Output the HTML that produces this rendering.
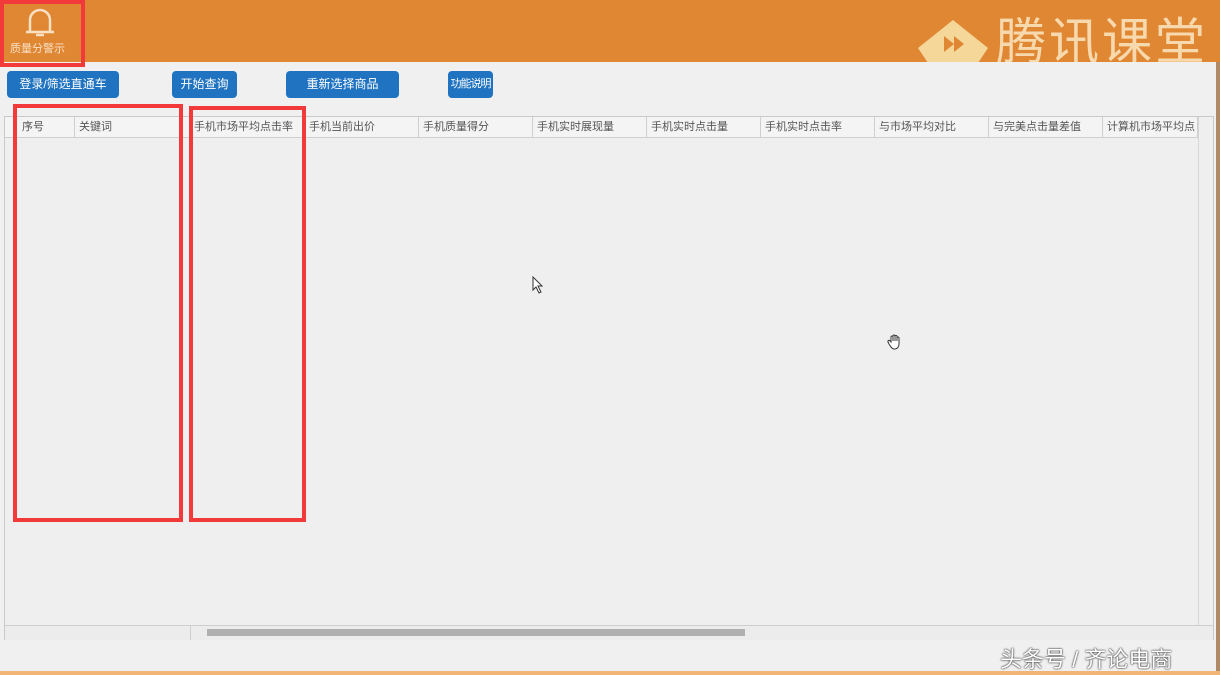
<!DOCTYPE html>
<html><head><meta charset="utf-8"><style>
*{margin:0;padding:0;box-sizing:border-box}
body{width:1220px;height:675px;overflow:hidden;background:#f0f0f0;font-family:"Liberation Sans","Noto Sans CJK SC",sans-serif;position:relative}
.hdr{position:absolute;left:0;top:0;width:1220px;height:62px;background:#e08733;overflow:hidden}
.btn{position:absolute;top:71px;height:27px;background:#1f73c0;border-radius:4px;color:#fff;font-size:12px;line-height:27px;text-align:center;white-space:nowrap;overflow:hidden}
.th{position:absolute;top:117px;height:21px;border-right:1px solid #cfcfcf;font-size:11px;color:#555;line-height:21px;padding-left:4px;white-space:nowrap;overflow:hidden}
.red{position:absolute;border:4px solid #f23a3a}
</style></head><body>
<div class="hdr">
<svg style="position:absolute;left:916px;top:18px" width="75" height="50" viewBox="0 0 75 50"><path d="M37 2 L72 30 L60 48 H14 L2 30 Z" fill="#f5d79a"/><path d="M28 18 l10 8 -10 8 Z M38 18 l10 8 -10 8 Z" fill="#e08733"/></svg>
<div style="position:absolute;left:996px;top:14px;font-size:50px;line-height:56px;color:#f7d9ad;letter-spacing:3px;white-space:nowrap">腾讯课堂</div>
</div>
<svg style="position:absolute;left:20px;top:6px" width="40" height="34" viewBox="0 0 40 34"><path d="M10 26 V14 a10 10 0 0 1 20 0 V26 Z M6 26 H34" fill="none" stroke="#fbe1c4" stroke-width="2.5" stroke-linejoin="round"/><path d="M16 29 h8" stroke="#fbe1c4" stroke-width="2.5"/></svg>
<div style="position:absolute;left:10px;top:40px;font-size:11px;color:#fbe1c4">质量分警示</div>
<div class="red" style="left:0;top:0;width:85px;height:67px"></div>
<div class="btn" style="left:7px;width:112px">登录/筛选直通车</div>
<div class="btn" style="left:172px;width:65px">开始查询</div>
<div class="btn" style="left:286px;width:113px">重新选择商品</div>
<div class="btn" style="left:448px;width:45px;font-size:11px;letter-spacing:-1px">功能说明</div>
<div style="position:absolute;left:4px;top:116px;width:1210px;height:524px;border:1px solid #c9c9c9;background:#efefef"></div>
<div style="position:absolute;left:5px;top:117px;width:1193px;height:21px;background:#f4f4f4;border-bottom:1px solid #cfcfcf"></div>
<div class="th" style="left:18px;width:57px">序号</div>
<div class="th" style="left:75px;width:115px">关键词</div>
<div class="th" style="left:190px;width:115px">手机市场平均点击率</div>
<div class="th" style="left:305px;width:114px">手机当前出价</div>
<div class="th" style="left:419px;width:114px">手机质量得分</div>
<div class="th" style="left:533px;width:114px">手机实时展现量</div>
<div class="th" style="left:647px;width:114px">手机实时点击量</div>
<div class="th" style="left:761px;width:114px">手机实时点击率</div>
<div class="th" style="left:875px;width:114px">与市场平均对比</div>
<div class="th" style="left:989px;width:114px">与完美点击量差值</div>
<div class="th" style="left:1103px;width:95px">计算机市场平均点</div>
<div style="position:absolute;left:1198px;top:117px;width:15px;height:509px;border-left:1px solid #d6d6d6"></div>
<div style="position:absolute;left:5px;top:625px;width:1208px;height:15px;border-top:1px solid #cfcfcf;background:#ececec"></div>
<div style="position:absolute;left:190px;top:626px;width:1px;height:14px;background:#cfcfcf"></div>
<div style="position:absolute;left:207px;top:629px;width:538px;height:7px;background:#b0b0b0"></div>
<div style="position:absolute;left:1216px;top:62px;width:4px;height:610px;background:#b08a66"></div>
<div style="position:absolute;left:0;top:671px;width:1220px;height:4px;background:#f3b576"></div>
<div style="position:absolute;left:1000px;top:642px;font-size:22px;color:#fff;text-shadow:0 0 2px #333,0 0 1px #000">头条号 / 齐论电商</div>
<div class="red" style="left:13px;top:104px;width:170px;height:418px"></div>
<div class="red" style="left:189px;top:106px;width:117px;height:416px"></div>
<svg style="position:absolute;left:532px;top:276px" width="12" height="18" viewBox="0 0 12 18"><path d="M1 1 V14 L4 11 L7 17 L9 16 L6 10 H10 Z" fill="#fff" stroke="#333"/></svg>
<svg style="position:absolute;left:886px;top:333px" width="18" height="18" viewBox="0 0 18 18"><path d="M5 9 V4 a1 1 0 0 1 2 0 V8 V3 a1 1 0 0 1 2 0 V8 V3.5 a1 1 0 0 1 2 0 V8 V5 a1 1 0 0 1 2 0 V11 c0 3 -2 5 -4 5 H8 c-2 0 -3 -2 -5 -5 l-1 -2 a1 1 0 0 1 2 -1 Z" fill="#fff" stroke="#333" stroke-width="1"/></svg>
</body></html>
